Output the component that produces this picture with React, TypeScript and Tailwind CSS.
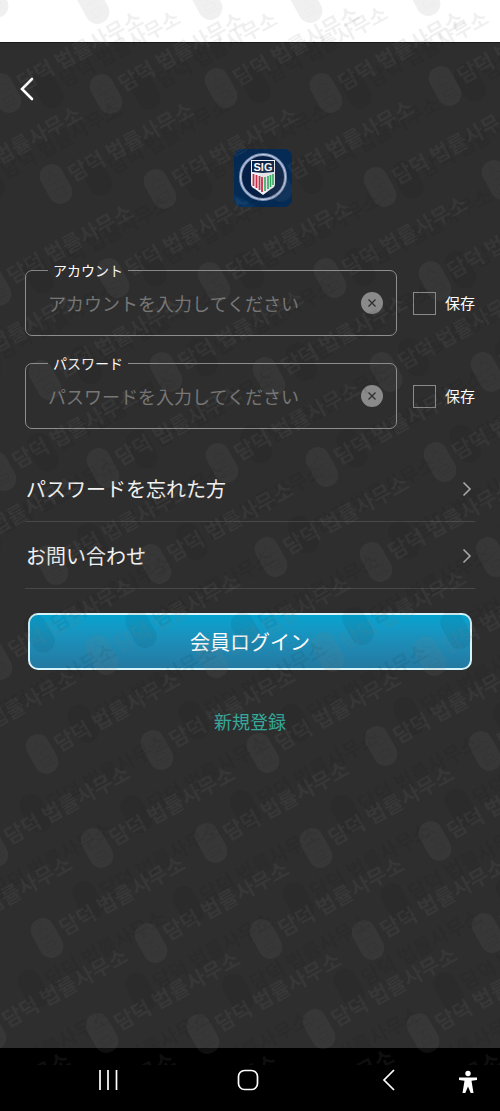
import { useState } from "react";

const stampPositions: [number, number][] = [
  [-8, -2], [93, 4], [206, 0], [306, 3], [424, -4],
  [5, 93], [106, 94], [221, 88], [326, 93], [445, 86],
  [-56, 188], [56, 184], [160, 189], [276, 182], [380, 187], [498, 180],
  [-5, 286], [113, 278], [214, 282], [330, 278], [435, 281],
  [-60, 376], [45, 380], [166, 372], [269, 377], [386, 372], [487, 372],
  [0, 471], [103, 468], [222, 463], [322, 467], [440, 462],
  [-60, 558], [52, 565], [155, 564], [271, 557], [376, 562], [492, 557],
  [-4, 660], [102, 655], [212, 658], [328, 652], [430, 656],
  [-62, 752], [42, 754], [157, 750], [263, 753], [381, 746], [485, 751],
  [-8, 847], [97, 848], [211, 843], [316, 848], [435, 841],
  [-66, 938], [47, 938], [151, 943], [266, 939], [368, 940], [488, 933],
  [-10, 1030], [102, 1033], [203, 1034], [319, 1029], [423, 1033],
  [-68, 1134], [37, 1134], [140, 1136], [256, 1131], [363, 1134],
];

const shadowPositions = stampPositions.filter(([, y]) => y > 50);

function Stamps({ positions }: { positions: [number, number][] }) {
  return (
    <>
      {positions.map(([x, y]) => (
        <g key={`${x}-${y}`} transform={`translate(${x} ${y}) rotate(-29)`}>
          <path d="M-12 -9a12 12 0 0 1 24 0v18a12 12 0 0 1-24 0z" />
          <path
            d="M0-16v5l-6 5M0-11l6 5M-7-2H7M0-2v4M-5 5H5M-5 5v5H5V5M-7 13H7"
            fill="none"
            stroke="#222222"
            strokeOpacity="0.3"
            strokeWidth="1"
          />
          {y > 50 && (
            <text x="16" y="7" fontSize="21" fontWeight="700">
              담덕 법률사무소
            </text>
          )}
        </g>
      ))}
    </>
  );
}

function Watermark() {
  return (
    <svg
      aria-hidden="true"
      className="pointer-events-none absolute inset-x-0 top-0 h-[calc(100%-46px)] w-full overflow-hidden font-['Noto_Sans_CJK_KR',sans-serif]"
    >
      <g fill="#000000" opacity="0.06" transform="translate(43 0) scale(0.96)">
        <Stamps positions={shadowPositions} />
      </g>
      <g fill="#808080" opacity="0.12">
        <Stamps positions={stampPositions} />
      </g>
    </svg>
  );
}

function Logo() {
  return (
    <svg viewBox="0 0 58 58" className="size-[58px]" role="img" aria-label="SIG">
      <rect width="58" height="58" rx="8" fill="#052b55" />
      <path d="M0 46l14 6 8 6H8a8 8 0 0 1-8-8z" fill="#083562" />
      <circle cx="29" cy="28" r="22.500" fill="#071f45" stroke="#7f93b8" strokeWidth="3" />
      <circle cx="29" cy="28" r="22.500" fill="none" stroke="#c9d3e6" strokeWidth="1" />
      <path d="M17 11h24v24c0 3-2 4-4 5l-8 6-8-6c-2-1-4-2-4-5z" fill="#f0f2f6" />
      <path d="M18 12h22v11l-11 1-11-1z" fill="#0b2045" />
      <text
        x="29"
        y="22"
        textAnchor="middle"
        fontSize="11"
        fontWeight="700"
        fill="#ffffff"
        className="font-['Liberation_Sans',sans-serif]"
      >
        SIG
      </text>
      <path d="M19.500 25v12M22.500 26v13M25.500 27v14M28 28v15" stroke="#c72f48" strokeWidth="1.800" />
      <path d="M31 28v14M34 27v13M36.500 26v12M39 25v11" stroke="#2bae5c" strokeWidth="1.600" />
    </svg>
  );
}

function Field({ id, label, type }: { id: string; label: string; type: string }) {
  const [value, setValue] = useState("");

  return (
    <div className="flex">
      <fieldset className="min-w-0 flex-1 rounded-[7px] border border-[#8e8e8e] px-[22px] pb-[9px]">
        <legend className="px-[5px] text-sm leading-5 text-white">
          <label htmlFor={id}>{label}</label>
        </legend>
        <div className="flex h-[46px] items-center">
          <input
            id={id}
            type={type}
            value={value}
            onChange={(event) => setValue(event.target.value)}
            placeholder={`${label}を入力してください`}
            className="h-8 min-w-0 flex-1 bg-transparent text-lg text-white outline-none placeholder:text-[#777777]"
          />
          <button
            type="button"
            aria-label="クリア"
            onClick={() => setValue("")}
            className="-mr-[9px] shrink-0"
          >
            <svg viewBox="0 0 22 22" className="size-[22px]">
              <circle cx="11" cy="11" r="11" fill="#8a8a8a" />
              <path d="M7.500 7.500l7 7M14.500 7.500l-7 7" stroke="#2e2e2e" strokeWidth="1.300" />
            </svg>
          </button>
        </div>
      </fieldset>
      <label className="ml-4 flex shrink-0 items-center gap-[9px] pt-[10px] text-[15px] text-white">
        <input
          type="checkbox"
          className="size-[23px] appearance-none border border-[#8a8a8a] checked:bg-[#04a2cf]"
        />
        保存
      </label>
    </div>
  );
}

function MenuLink({ text }: { text: string }) {
  return (
    <a
      href="#"
      className="flex h-[67px] items-center justify-between border-b border-[#484848] pt-[2px] pl-px text-xl text-[#f2f2f2]"
    >
      {text}
      <svg viewBox="0 0 10 16" className="mr-[3px] h-4 w-[10px]" fill="none">
        <path d="M1.500 1.500L8 8l-6.500 6.500" stroke="#a8a8a8" strokeWidth="1.600" />
      </svg>
    </a>
  );
}

function NavigationBar() {
  return (
    <nav className="flex h-[63px] items-center bg-black text-white">
      <div className="flex flex-1 justify-between pr-[59px] pl-[97px]">
        <button type="button" aria-label="履歴">
          <svg viewBox="0 0 22 22" className="size-[22px]">
            <path d="M3 1v20M11 1v20M19.500 1v20" stroke="currentColor" strokeWidth="1.700" />
          </svg>
        </button>
        <button type="button" aria-label="ホーム">
          <svg viewBox="0 0 22 22" className="size-[22px]" fill="none">
            <rect x="1.500" y="1.500" width="19" height="19" rx="6" stroke="currentColor" strokeWidth="1.700" />
          </svg>
        </button>
        <button type="button" aria-label="戻る">
          <svg viewBox="0 0 22 22" className="size-[22px]" fill="none">
            <path d="M17 1L7 11l10 10" stroke="currentColor" strokeWidth="1.700" />
          </svg>
        </button>
      </div>
      <button type="button" aria-label="ユーザー補助" className="mr-[22px] pt-1">
        <svg viewBox="0 0 20 24" className="h-6 w-5" fill="currentColor">
          <circle cx="10" cy="3.500" r="2.700" />
          <path d="M1 7.500h18v2.600l-5.500.6L15.500 23h-2.800L10 16.500 7.300 23H4.500l2-12.300L1 10.100z" />
        </svg>
      </button>
    </nav>
  );
}

export default function App() {
  return (
    <div className="relative flex min-h-screen flex-col bg-[#2e2e2e] font-['Noto_Sans_CJK_JP',sans-serif]">
      <div className="h-[43px] border-b border-[#1a1a1a] bg-white" />

      <main className="flex-1 px-[25px]">
        <button type="button" aria-label="戻る" className="-ml-2 block pt-[34px]">
          <svg viewBox="0 0 20 24" className="h-6 w-5" fill="none">
            <path d="M15 2L5 12l10 10" stroke="#ffffff" strokeWidth="2.600" strokeLinecap="round" />
          </svg>
        </button>

        <div className="flex justify-center pt-12 pl-[26px]">
          <Logo />
        </div>

        <form className="mt-[53px]" onSubmit={(event) => event.preventDefault()}>
          <div className="flex flex-col gap-[17px]">
            <Field id="account" label="アカウント" type="text" />
            <Field id="password" label="パスワード" type="password" />
          </div>

          <div className="mt-[26px]">
            <MenuLink text="パスワードを忘れた方" />
            <MenuLink text="お問い合わせ" />
          </div>

          <div className="mt-6 px-[3px]">
            <button
              type="submit"
              className="h-[57px] w-full rounded-[10px] border-2 border-[#d5f3fa] bg-linear-to-b from-[#04a3d0] to-[#2479a1] text-xl text-white"
            >
              会員ログイン
            </button>
          </div>
        </form>

        <div className="mt-[37px] text-center">
          <a href="#" className="text-lg text-[#35a99a]">
            新規登録
          </a>
        </div>
      </main>

      <NavigationBar />
      <Watermark />
    </div>
  );
}
